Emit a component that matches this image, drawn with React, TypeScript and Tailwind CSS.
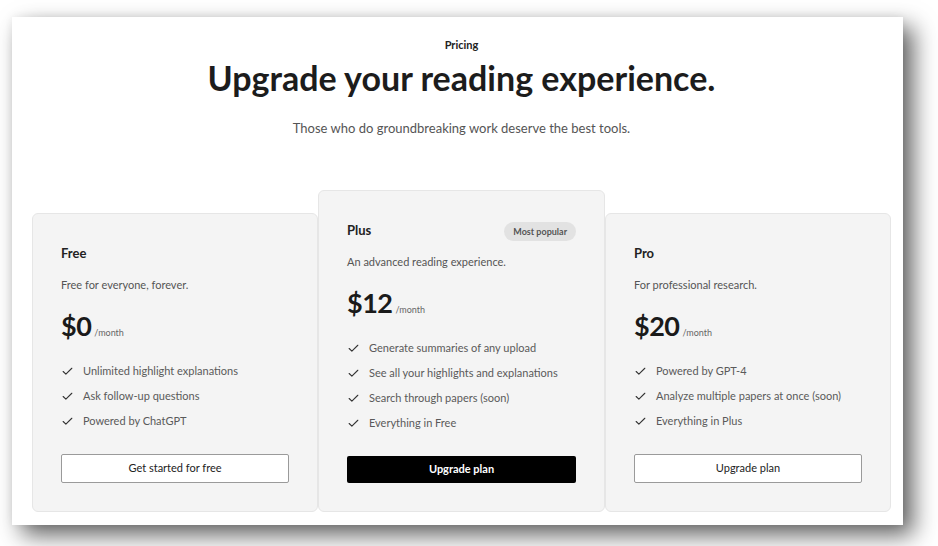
import React from 'react';

type Plan = {
  name: string;
  blurb: string;
  price: string;
  features: string[];
  cta: string;
  featured?: boolean;
};

const plans: Plan[] = [
  {
    name: 'Free',
    blurb: 'Free for everyone, forever.',
    price: '$0',
    features: ['Unlimited highlight explanations', 'Ask follow-up questions', 'Powered by ChatGPT'],
    cta: 'Get started for free',
  },
  {
    name: 'Plus',
    blurb: 'An advanced reading experience.',
    price: '$12',
    features: [
      'Generate summaries of any upload',
      'See all your highlights and explanations',
      'Search through papers (soon)',
      'Everything in Free',
    ],
    cta: 'Upgrade plan',
    featured: true,
  },
  {
    name: 'Pro',
    blurb: 'For professional research.',
    price: '$20',
    features: ['Powered by GPT-4', 'Analyze multiple papers at once (soon)', 'Everything in Plus'],
    cta: 'Upgrade plan',
  },
];

function Check() {
  return (
    <svg width="13" height="13" viewBox="0 0 24 24" fill="none" stroke="#333" strokeWidth="2" strokeLinecap="round" strokeLinejoin="round">
      <path d="M20 6 9 17l-5-5" />
    </svg>
  );
}

function PlanCard({ plan }: { plan: Plan }) {
  return (
    <div className="flex flex-col rounded-md border border-[#e6e6e6] bg-[#f4f4f4] px-[28px] pt-[30px] pb-[28px]">
      <div className="flex h-[20px] items-center justify-between">
        <span className="text-[13px] font-bold text-[#222]">{plan.name}</span>
        {plan.featured && (
          <span className="rounded-full bg-[#e2e2e2] px-[9px] py-[3px] text-[9px] font-bold leading-[13px] text-[#555]">
            Most popular
          </span>
        )}
      </div>
      <p className="mt-[13px] text-[11px] leading-[16px] text-[#555]">{plan.blurb}</p>
      <div className="mt-[17px] flex h-[32px] items-baseline gap-[3px]">
        <span className="text-[27px] font-bold leading-[32px] tracking-[-0.5px] text-[#1a1a1a]">{plan.price}</span>
        <span className="text-[9px] text-[#666]">/month</span>
      </div>
      <ul className="mt-[21px] flex flex-col gap-[9px]">
        {plan.features.map((f) => (
          <li key={f} className="flex h-[16px] items-center gap-[9px] text-[11px] text-[#5a5a5a]">
            <Check />
            {f}
          </li>
        ))}
      </ul>
      <button
        className={
          plan.featured
            ? 'mt-[25px] h-[27px] w-full rounded-[2px] bg-black text-[11px] font-bold text-white'
            : 'mt-[25px] h-[29px] w-full rounded-[2px] border border-[#9a9a9a] bg-white text-[11px] text-[#222]'
        }
      >
        {plan.cta}
      </button>
    </div>
  );
}

export default function App() {
  return (
    <div className="h-[546px] w-[938px] overflow-hidden bg-white pl-[12px] pt-[17px]" style={{ fontFamily: 'Lato, "Open Sans", sans-serif' }}>
      <div className="h-[508px] w-[891px] bg-white pl-[20px] pr-[12px] pt-[20px] shadow-[10px_10px_22px_rgba(0,0,0,0.62),0_0_8px_rgba(0,0,0,0.06)]">
        <p className="text-center text-[11px] font-bold leading-[16px] text-[#222]">Pricing</p>
        <h1 className="mt-[5px] text-center text-[34px] font-bold leading-[40px] text-[#1c1c1c]">
          Upgrade your reading experience.
        </h1>
        <p className="mt-[20px] text-center text-[13px] leading-[20px] text-[#555]">
          Those who do groundbreaking work deserve the best tools.
        </p>
        <div className="mt-[52px] grid grid-cols-[286px_287px_286px] items-end">
          {plans.map((p) => (
            <PlanCard key={p.name} plan={p} />
          ))}
        </div>
      </div>
    </div>
  );
}
